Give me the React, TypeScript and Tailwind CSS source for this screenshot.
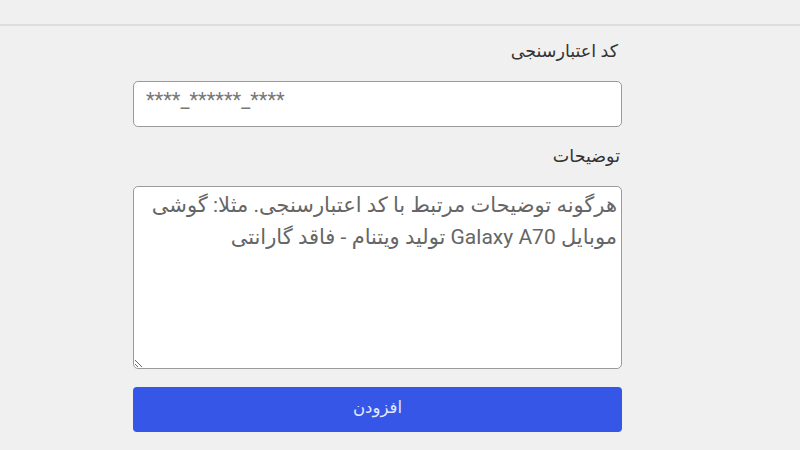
export default function App() {
  return (
    <div
      dir="rtl"
      className="min-h-[450px] w-[800px] bg-[#f0f0f0] text-[#333]"
      style={{ fontFamily: 'Roboto, "DejaVu Sans", sans-serif' }}
    >
      {/* top strip */}
      <div className="h-[26px] border-b-2 border-[#dedede]" />

      <form className="mr-[178px] flex w-[489px] flex-col" onSubmit={e => e.preventDefault()}>
        <label className="mt-[12px] pr-[4px] text-[17.5px] leading-[26px] text-[#333]">کد اعتبارسنجی</label>
        <input
          dir="ltr"
          className="mt-[17px] h-[46px] rounded-[5px] border border-[#9a9a9a] bg-white pl-[12px] pt-[5px] pb-[13px] text-[20px] placeholder:text-[#777] outline-none"
          placeholder="****_******_****"
        />

        <label className="mt-[16px] pr-[2px] text-[17.5px] leading-[26px] text-[#333]">توضیحات</label>
        <textarea
          className="mt-[17px] h-[183px] rounded-[5px] border border-[#9a9a9a] bg-white pl-[8px] pr-[4px] pt-[2px] text-[21px] leading-[32px] placeholder:text-[#666] outline-none"
          placeholder="هرگونه توضیحات مرتبط با کد اعتبارسنجی. مثلا: گوشی موبایل Galaxy A70 تولید ویتنام - فاقد گارانتی"
        />

        <button
          type="submit"
          className="mt-[18px] h-[45px] rounded-[4px] bg-[#3556e6] pb-[2px] text-[16.5px] text-[#e3e9ff]"
        >
          افزودن
        </button>
      </form>
    </div>
  );
}
